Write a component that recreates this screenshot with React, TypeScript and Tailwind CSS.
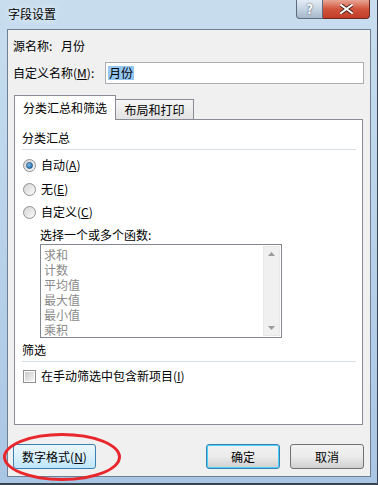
import React from "react";

const font = { fontFamily: '"Noto Sans CJK SC", "Microsoft YaHei", sans-serif' };

function Radio({ checked }: { checked?: boolean }) {
  return (
    <span className="flex h-[13px] w-[13px] items-center justify-center rounded-full border border-[#8e8f8f] bg-gradient-to-br from-[#d4d4d4] to-[#fbfbfb]">
      {checked && (
        <span className="h-[7px] w-[7px] rounded-full border border-[#1c5180] bg-gradient-to-br from-[#8ecbf5] to-[#1c6cb0]" />
      )}
    </span>
  );
}

function Key({ text, k }: { text: string; k: string }) {
  return (
    <span>
      {text}(<span className="underline">{k}</span>)
    </span>
  );
}

function ArrowUp() {
  return (
    <svg width="7" height="4" viewBox="0 0 7 4">
      <path d="M0 4 L3.5 0 L7 4 Z" fill="#9a9a9a" />
    </svg>
  );
}

function ArrowDown() {
  return (
    <svg width="7" height="4" viewBox="0 0 7 4">
      <path d="M0 0 L3.5 4 L7 0 Z" fill="#9a9a9a" />
    </svg>
  );
}

export default function App() {
  const funcs = ["求和", "计数", "平均值", "最大值", "最小值", "乘积"];

  return (
    <div
      className="relative flex h-[485px] w-[378px] flex-col overflow-hidden border-b-2 border-r border-[#3b4450] bg-gradient-to-b from-[#c8deef] via-[#b9d2ea] to-[#a9c6e4] text-[12px] leading-[16px] text-black"
      style={font}
    >
      {/* title bar */}
      <div className="flex h-[29px] shrink-0 items-start">
        <div className="pl-[8px] pt-[6px] [text-shadow:0_0_6px_#ffffff]">字段设置</div>
        <div className="flex-1" />
        <div className="mr-[7px] flex h-[19px]">
          <div className="flex w-[27px] items-center justify-center rounded-bl-[4px] border border-t-0 border-[#5b6b80] bg-gradient-to-b from-[#e3ecf5] via-[#c6d4e2] to-[#a7b8cb] text-[13px] font-bold text-white [text-shadow:0_0_2px_#2b3a4f]">
            ?
          </div>
          <div className="flex w-[47px] items-center justify-center rounded-br-[4px] border border-l-0 border-t-0 border-[#6b2a22] bg-gradient-to-b from-[#e8a594] via-[#d2533c] to-[#c23c25]">
            <svg width="13" height="10" viewBox="0 0 13 10">
              <path d="M1 1 L12 9 M12 1 L1 9" stroke="#3a1a14" strokeWidth="3.6" strokeLinecap="square" />
              <path d="M1 1 L12 9 M12 1 L1 9" stroke="#ffffff" strokeWidth="2" strokeLinecap="square" />
            </svg>
          </div>
        </div>
      </div>

      {/* client area */}
      <div className="ml-[7px] mr-[6px] flex h-[448px] flex-col border border-[#6e7f93] bg-[#f0f0f0] pl-[5px] pr-[6px] pt-[8px]">
        <div className="flex h-[16px]">
          <span className="w-[48px]">源名称:</span>
          <span>月份</span>
        </div>

        <div className="mt-[8px] flex h-[22px] items-center">
          <span className="w-[92px]">
            <Key text="自定义名称" k="M" />:
          </span>
          <div className="flex h-[22px] flex-1 items-center border border-[#abadb3] bg-white pl-[2px]">
            <span className="bg-[#94c6f3] px-[1px] leading-[14px]">月份</span>
          </div>
        </div>

        {/* tabs */}
        <div className="ml-[1px] mt-[10px] flex h-[25px] items-end">
          <div className="relative z-10 -mb-[1px] flex h-[25px] w-[102px] items-center justify-center border border-b-0 border-[#898c95] bg-white">
            分类汇总和筛选
          </div>
          <div className="flex h-[20px] w-[78px] items-center justify-center border border-b-0 border-l-0 border-[#898c95] bg-gradient-to-b from-[#f5f5f5] to-[#e3e3e3]">
            布局和打印
          </div>
        </div>

        <div className="ml-[1px] mr-[1px] flex h-[306px] flex-col border border-[#898c95] bg-white pl-[7px] pr-[6px] pt-[10px]">
          <div className="h-[16px]">分类汇总</div>
          <div className="mt-[3px] h-px bg-[#d5dfe5]" />

          <div className="mt-[7px] flex h-[16px] items-center gap-[5px] pl-[1px]">
            <Radio checked />
            <Key text="自动" k="A" />
          </div>
          <div className="mt-[8px] flex h-[16px] items-center gap-[5px] pl-[1px]">
            <Radio />
            <Key text="无" k="E" />
          </div>
          <div className="mt-[7px] flex h-[16px] items-center gap-[5px] pl-[1px]">
            <Radio />
            <Key text="自定义" k="C" />
          </div>

          <div className="mt-[7px] h-[16px] pl-[18px]">选择一个或多个函数:</div>

          <div className="ml-[18px] mt-px flex h-[94px] w-[242px] border border-[#828790] bg-white">
            <div className="flex-1 pl-[3px] pt-[2px] text-[#8a8a8a]">
              {funcs.map((f) => (
                <div key={f} className="h-[15px] overflow-hidden leading-[15px]">
                  {f}
                </div>
              ))}
            </div>
            <div className="my-px mr-px flex w-[17px] flex-col items-center justify-between border border-[#e8e8e8] bg-[#f0f0f0] py-[5px]">
              <ArrowUp />
              <ArrowDown />
            </div>
          </div>

          <div className="mt-[4px] h-[16px]">筛选</div>
          <div className="mt-[3px] h-px bg-[#d5dfe5]" />

          <div className="mt-[6px] flex h-[16px] items-center gap-[5px] pl-[1px]">
            <span className="flex h-[13px] w-[13px] items-center justify-center border border-[#8e8f8f] bg-white">
              <span className="h-[9px] w-[9px] bg-gradient-to-br from-[#cbcbcb] to-[#f6f6f6]" />
            </span>
            <Key text="在手动筛选中包含新项目" k="I" />
          </div>
        </div>

        {/* buttons */}
        <div className="mt-[19px] flex h-[25px] items-center">
          <button className="flex h-[25px] w-[83px] items-center justify-center rounded-[3px] border border-[#3c7fb1] bg-gradient-to-b from-[#eaf6fd] via-[#d9f0fc] to-[#bee6fd]">
            <Key text="数字格式" k="N" />
          </button>
          <div className="flex-1" />
          <button className="flex h-[25px] w-[74px] items-center justify-center rounded-[3px] border border-[#3c7fb1] bg-gradient-to-b from-[#f2f2f2] via-[#ebebeb] to-[#cfcfcf] shadow-[inset_0_0_0_1px_#48d2fb]">
            确定
          </button>
          <button className="ml-[10px] flex h-[25px] w-[74px] items-center justify-center rounded-[3px] border border-[#707070] bg-gradient-to-b from-[#f2f2f2] via-[#ebebeb] to-[#cfcfcf]">
            取消
          </button>
        </div>
      </div>

      {/* red ellipse annotation */}
      <div className="pointer-events-none absolute left-[3px] top-[433px] h-[48px] w-[118px] rounded-[50%] border-[3px] border-[#e8262c]" />
    </div>
  );
}
